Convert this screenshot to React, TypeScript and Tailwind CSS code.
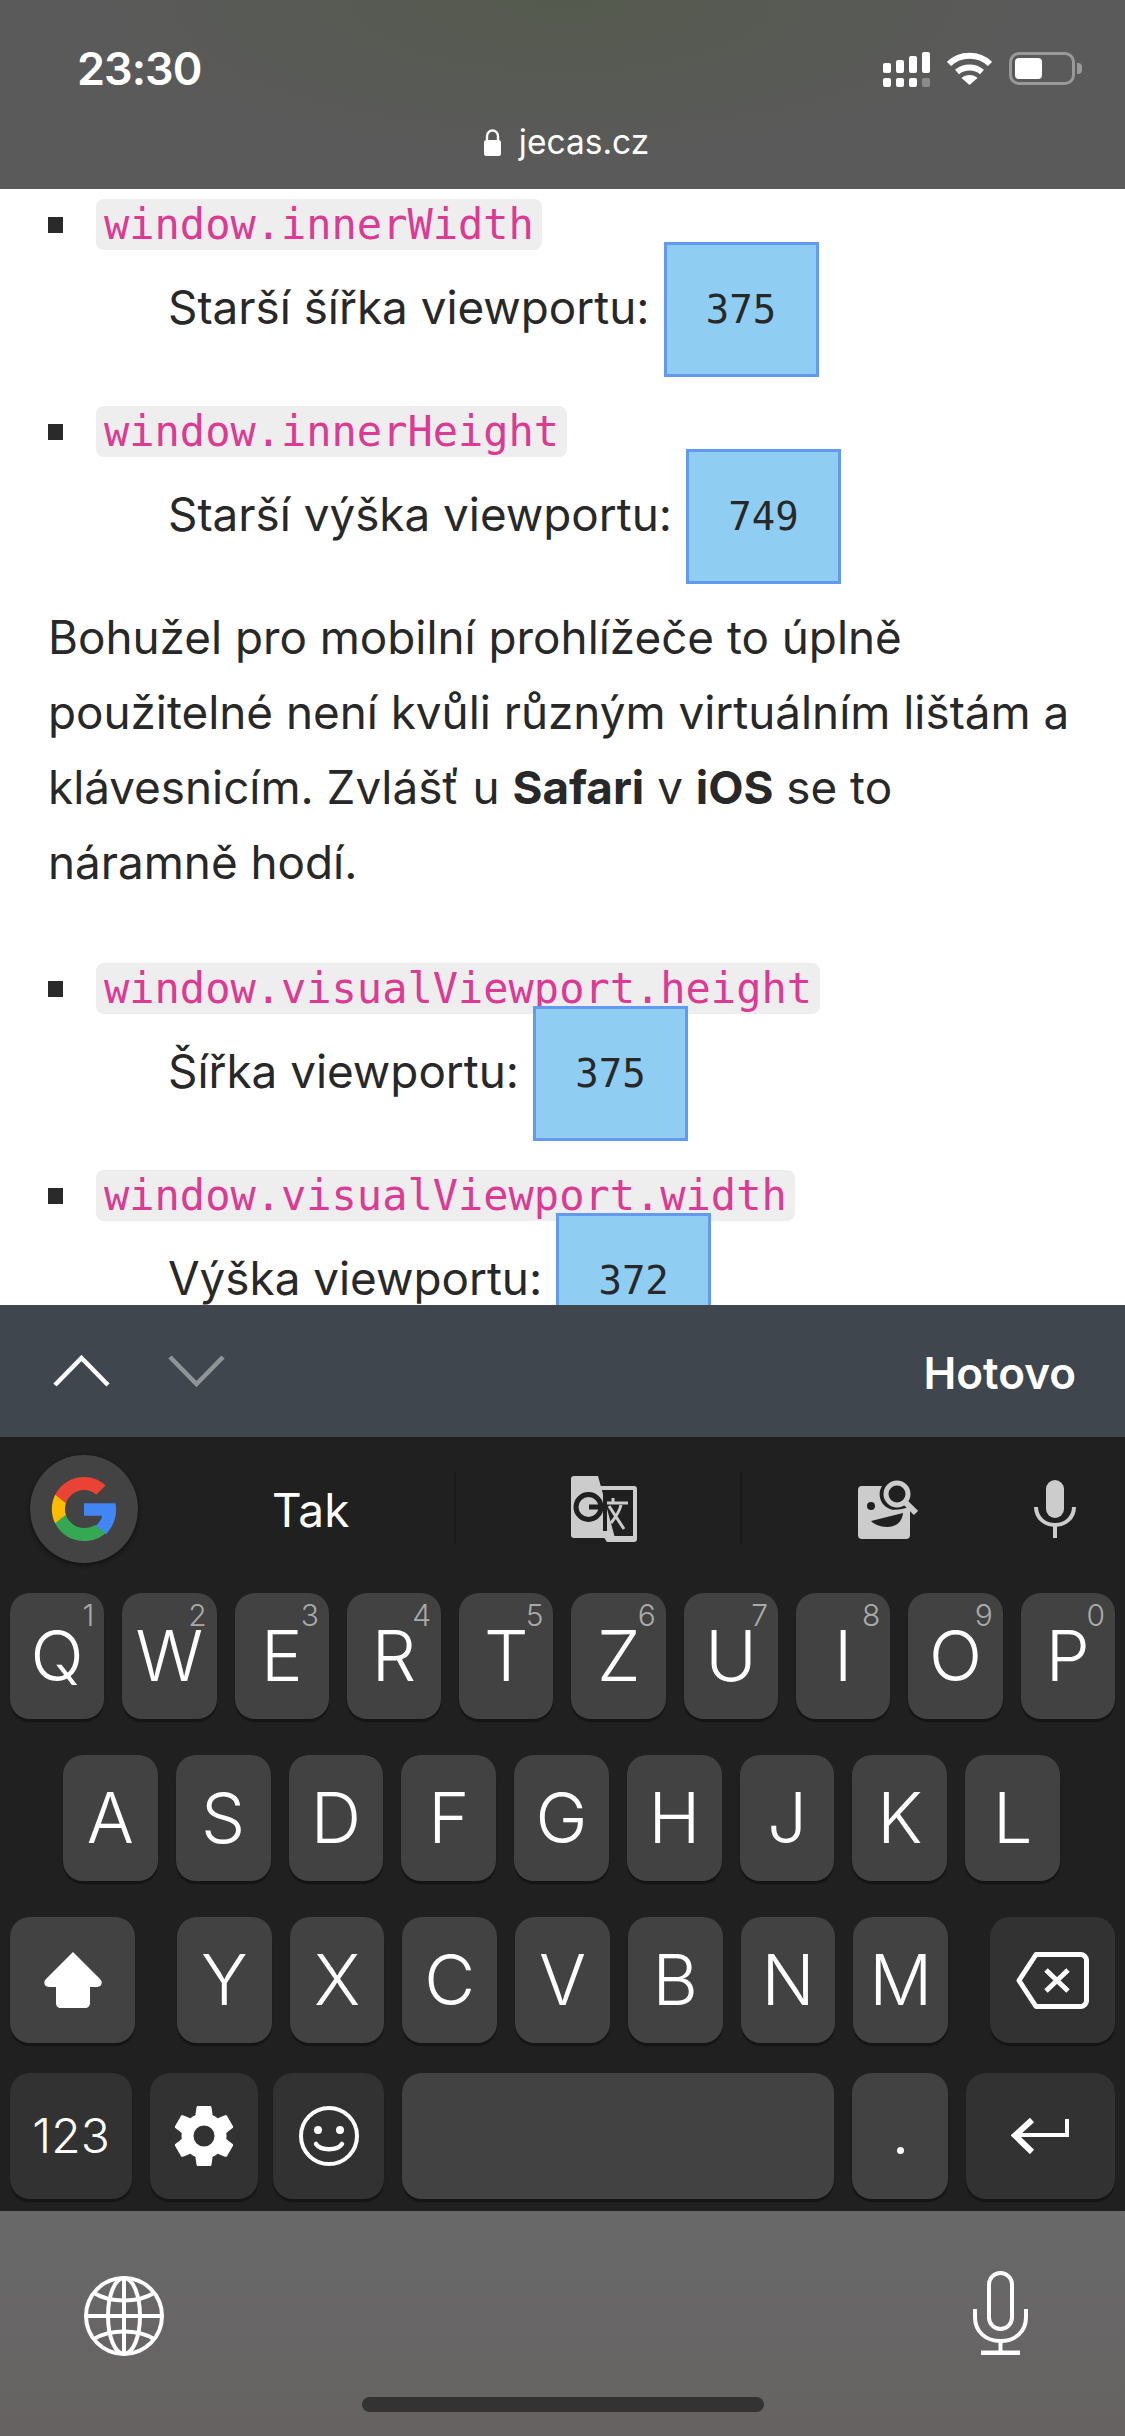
import type { ReactNode } from "react";

const Key = ({
  children,
  hint,
  dark,
  className = "",
}: {
  children?: ReactNode;
  hint?: string;
  dark?: boolean;
  className?: string;
}) => (
  <div
    className={`relative h-[126px] flex items-center justify-center rounded-[20px] shadow-[0_3px_1px_#151515] text-white ${dark ? "bg-[#323232]" : "bg-[#424242]"} ${className}`}
  >
    {hint && (
      <span className="absolute right-[10px] top-[4px] text-[30px] leading-[36px] font-light text-[#aaaaaa]">
        {hint}
      </span>
    )}
    {children}
  </div>
);

const Letter = ({ l, hint }: { l: string; hint?: string }) => (
  <Key hint={hint} className="flex-1">
    <span className="text-[70px] leading-none font-light">{l}</span>
  </Key>
);

const Entry = ({
  code,
  label,
  value,
  spaced,
}: {
  code: string;
  label: string;
  value: string;
  spaced?: boolean;
}) => (
  <li className={spaced ? "mt-[29px]" : ""}>
    <div className="flex items-center">
      <span className="w-[15px] h-[16px] ml-[48px] mr-[33px] bg-[#2a2a2a]" />
      <code className="h-[51px] px-[8px] flex items-center rounded-[8px] bg-[#efeeef] text-[#dc3a93] text-[42px] font-['DejaVu_Sans_Mono',monospace]">
        {code}
      </code>
    </div>
    <div className="relative flex items-center pl-[168px] -mt-[8px]">
      <span className="text-[45.8px] -mt-[2px]">{label}</span>
      <span className="ml-[14px] w-[155px] h-[135px] pt-[2px] flex items-center justify-center border-[3px] border-[#639af0] bg-[#8fcdf2] text-[39px] font-['DejaVu_Sans_Mono',monospace]">
        {value}
      </span>
    </div>
  </li>
);

const GoogleG = () => (
  <svg viewBox="0 0 48 48" className="w-[70px] h-[70px]">
    <path fill="#4285F4" d="M46 24.5c0-1.6-.1-3.1-.4-4.5H24v8.700h12.400c-.5 2.800-2.100 5.200-4.500 6.800v5.600h7.200C43.400 36.700 46 31.100 46 24.500z" />
    <path fill="#34A853" d="M24 46c6 0 11-2 14.700-5.400l-7.200-5.600c-2 1.300-4.500 2.100-7.500 2.100-5.800 0-10.700-3.900-12.400-9.100H4.200v5.800C7.900 41.100 15.400 46 24 46z" />
    <path fill="#FBBC05" d="M11.600 28c-.9-2.600-.9-5.400 0-8v-5.800H4.200c-3 6-3 13.600 0 19.600L11.600 28z" />
    <path fill="#EA4335" d="M24 10.900c3.200 0 6.100 1.100 8.400 3.300l6.400-6.400C34.900 4.200 29.900 2 24 2 15.400 2 7.900 6.900 4.200 14.200l7.400 5.800c1.700-5.200 6.600-9.100 12.400-9.100z" />
  </svg>
);

export default function App() {
  return (
    <div className="w-[1125px] h-[2436px] flex flex-col overflow-hidden bg-white text-[#282828] font-['Inter',sans-serif]">
      {/* status bar + address */}
      <header className="relative h-[189px] shrink-0 bg-[radial-gradient(ellipse_at_top,#555a4e,#5a5a5a_60%)] text-white">
        <div className="flex items-start justify-between pl-[77px] pr-[43px] pt-[42px]">
          <span className="text-[45px] leading-[54px] font-semibold tracking-[-1px]">23:30</span>
          <div className="flex items-start gap-[17px] pt-[10px]">
            <svg viewBox="0 0 47 35" className="w-[47px] h-[35px]" fill="#fff">
              <rect x="0" y="11" width="8" height="10" rx="2" />
              <rect x="13" y="8" width="8" height="13" rx="2" />
              <rect x="26" y="4" width="8" height="17" rx="2" />
              <rect x="39" y="0" width="8" height="21" rx="2" />
              <rect x="0" y="26" width="8" height="9" rx="2" />
              <rect x="13" y="26" width="8" height="9" rx="2" />
              <rect x="26" y="26" width="8" height="9" rx="2" />
              <rect x="39" y="26" width="8" height="9" rx="2" opacity="0.3" />
            </svg>
            <svg viewBox="0 0 45 33" className="w-[45px] h-[33px]" fill="none" stroke="#fff" strokeWidth="6">
              <path d="M2 12C13 1 32 1 43 12" />
              <path d="M10 20c7-6 18-6 25 0" />
              <path d="M22.500 33l-8-7c4-4 12-4 16 0z" fill="#fff" stroke="none" />
            </svg>
            <div className="flex items-center gap-[2px]">
              <div className="w-[66px] h-[33px] rounded-[10px] border-[3px] border-[#999999] p-[3px]">
                <div className="w-[27px] h-full rounded-[4px] bg-white" />
              </div>
              <div className="w-[5px] h-[11px] rounded-r-[4px] bg-[#999999]" />
            </div>
          </div>
        </div>
        <div className="flex items-center justify-center gap-[18px] absolute left-[8px] right-0 top-[120px]">
          <svg viewBox="0 0 17 27" className="w-[17px] h-[27px]" fill="#fff">
            <path d="M3 11V7a5.500 5.500 0 0 1 11 0v4" fill="none" stroke="#fff" strokeWidth="2.400" />
            <rect x="0" y="11" width="17" height="16" rx="2.500" />
          </svg>
          <span className="text-[33.5px] leading-[44px]">jecas.cz</span>
        </div>
      </header>

      {/* page content */}
      <main className="flex-1 min-h-0 overflow-hidden pt-[10px]">
        <ul>
          <Entry code="window.innerWidth" label="Starší šířka viewportu:" value="375" />
          <Entry code="window.innerHeight" label="Starší výška viewportu:" value="749" spaced />
        </ul>
        <p className="mt-[16px] mb-[63px] pl-[48px] pr-[40px] text-[45.8px] leading-[75px]">
          Bohužel pro mobilní prohlížeče to úplně použitelné není kvůli různým virtuálním lištám a klávesnicím. Zvlášť u <strong>Safari</strong> v <strong>iOS</strong> se to náramně hodí.
        </p>
        <ul>
          <Entry code="window.visualViewport.height" label="Šířka viewportu:" value="375" />
          <Entry code="window.visualViewport.width" label="Výška viewportu:" value="372" spaced />
        </ul>
      </main>

      {/* form accessory bar */}
      <div className="h-[132px] shrink-0 flex items-center justify-between bg-[#40464d] pl-[53px] pr-[49px] text-white">
        <div className="flex items-center gap-[58px]">
          <svg viewBox="0 0 57 32" className="w-[57px] h-[32px]" fill="none" stroke="#fff" strokeWidth="4.500">
            <path d="M2 30L28.500 3 55 30" />
          </svg>
          <svg viewBox="0 0 57 32" className="w-[57px] h-[32px]" fill="none" stroke="#8f9497" strokeWidth="4.500">
            <path d="M2 2l26.500 27L55 2" />
          </svg>
        </div>
        <span className="text-[44px] font-semibold mt-[4px]">Hotovo</span>
      </div>

      {/* keyboard */}
      <div className="h-[774px] shrink-0 bg-[#202020] pt-[18px]">
        <div className="flex items-center h-[108px] pl-[30px]">
          <div className="w-[108px] h-[108px] shrink-0 rounded-full bg-[#434343] flex items-center justify-center shadow-[0_2px_4px_#111]">
            <GoogleG />
          </div>
          <span className="ml-[134px] w-[75px] mt-[2px] text-[46px] text-white whitespace-nowrap">Tak</span>
          <div className="ml-[107px] w-[2px] h-[72px] bg-[#1a1a1a]" />
          <svg viewBox="0 0 66 66" className="ml-[115px] w-[66px] h-[66px]">
            <path fill="#cccccc" d="M3 0h24l17 62H3a3 3 0 0 1-3-3V3a3 3 0 0 1 3-3z" />
            <path fill="#cccccc" d="M26 10h37a3 3 0 0 1 3 3v50a3 3 0 0 1-3 3H36l-4-6h30V14H27z" />
            <circle cx="17.500" cy="31" r="12.500" fill="none" stroke="#202020" strokeWidth="5" />
            <path d="M18 31h12" stroke="#202020" strokeWidth="5" />
            <rect x="32" y="15" width="4" height="40" fill="#202020" />
            <path d="M36 27h21M42 22v5M38 30l15 23M50 29c-2 8-6 13-10 18" stroke="#cccccc" fill="none" strokeWidth="3" />
          </svg>
          <div className="ml-[103px] w-[2px] h-[72px] bg-[#1a1a1a]" />
          <svg viewBox="0 0 60 60" className="ml-[116px] w-[60px] h-[60px]">
            <path fill="#cccccc" d="M4 7h20c-5 8-2 19 8 23 5 2 12 0 20-2v28a4 4 0 0 1-4 4H4a4 4 0 0 1-4-4V11a4 4 0 0 1 4-4z" />
            <circle cx="39" cy="15" r="11" fill="none" stroke="#cccccc" strokeWidth="5" />
            <path d="M47 23l11 11" stroke="#cccccc" strokeWidth="6" />
            <circle cx="13" cy="27" r="4" fill="#202020" />
            <path d="M13 42l32-8c-1 10-8 14-16 14-6 0-12-2-16-6z" fill="#202020" />
          </svg>
          <svg viewBox="0 0 42 58" className="ml-[116px] w-[42px] h-[58px]">
            <rect x="12" y="0" width="18" height="38" rx="9" fill="#cccccc" />
            <path d="M2 27c0 11 9 18 19 18s19-7 19-18" fill="none" stroke="#cccccc" strokeWidth="4" />
            <path d="M21 44v14" stroke="#cccccc" strokeWidth="4" />
          </svg>
        </div>

        <div className="mt-[30px] flex gap-[18px] px-[10px]">
          <Letter l="Q" hint="1" />
          <Letter l="W" hint="2" />
          <Letter l="E" hint="3" />
          <Letter l="R" hint="4" />
          <Letter l="T" hint="5" />
          <Letter l="Z" hint="6" />
          <Letter l="U" hint="7" />
          <Letter l="I" hint="8" />
          <Letter l="O" hint="9" />
          <Letter l="P" hint="0" />
        </div>

        <div className="mt-[36px] flex gap-[18px] pl-[63px] pr-[65px]">
          {["A", "S", "D", "F", "G", "H", "J", "K", "L"].map((l) => (
            <Letter key={l} l={l} />
          ))}
        </div>

        <div className="mt-[36px] flex gap-[18px] px-[10px]">
          <Key className="w-[125px] mr-[24px]">
            <svg viewBox="0 0 58 56" className="w-[58px] h-[56px]" fill="#fff">
              <path d="M29 0L56 27c3 3 2 8-3 8h-7v16c0 3-2 5-5 5H17c-3 0-5-2-5-5V35H5c-5 0-6-5-3-8z" />
            </svg>
          </Key>
          {["Y", "X", "C", "V", "B", "N", "M"].map((l) => (
            <Letter key={l} l={l} />
          ))}
          <Key dark className="w-[125px] ml-[24px]">
            <svg viewBox="0 0 73 57" className="w-[73px] h-[57px]" fill="none" stroke="#fff" strokeWidth="5">
              <path d="M20 2.500h44a6 6 0 0 1 6.500 6.500v39a6 6 0 0 1-6.500 6.500H20L3 28.500z" strokeLinejoin="round" />
              <path d="M30 18l22 21M52 18L30 39" />
            </svg>
          </Key>
        </div>

        <div className="mt-[30px] flex gap-[18px] px-[10px]">
          <Key dark className="w-[122px]">
            <span className="text-[48px] font-[350]">123</span>
          </Key>
          <Key dark className="w-[108px]">
            <svg viewBox="0 0 24 24" className="w-[72px] h-[72px]" fill="#fff">
              <path d="M19.430 12.980c.04-.32.070-.64.070-.98s-.03-.660-.070-.98l2.110-1.650c.19-.15.240-.42.120-.64l-2-3.460c-.12-.22-.39-.3-.610-.22l-2.490 1c-.52-.4-1.080-.73-1.690-.98l-.38-2.650A.488.488 0 0 0 14 2h-4c-.25 0-.46.18-.49.42l-.38 2.650c-.61.25-1.170.59-1.690.98l-2.490-1c-.23-.09-.49 0-.61.22l-2 3.460c-.13.22-.07.490.12.640l2.110 1.650c-.04.32-.07.650-.07.980s.03.660.07.980l-2.110 1.650c-.19.15-.24.42-.12.640l2 3.460c.12.22.39.3.610.22l2.490-1c.52.4 1.080.73 1.690.98l.38 2.650c.03.24.24.42.49.42h4c.25 0 .46-.18.49-.42l.38-2.650c.61-.25 1.170-.59 1.690-.98l2.490 1c.23.09.49 0 .61-.22l2-3.460c.12-.22.07-.49-.12-.64l-2.110-1.650zM12 15.500a3.500 3.500 0 1 1 0-7 3.500 3.500 0 0 1 0 7z" />
            </svg>
          </Key>
          <Key dark className="w-[111px] -ml-[3px]">
            <svg viewBox="0 0 60 60" className="w-[60px] h-[60px]" fill="none" stroke="#fff" strokeWidth="4">
              <circle cx="30" cy="30" r="28" />
              <circle cx="19" cy="24" r="4" fill="#fff" stroke="none" />
              <circle cx="41" cy="24" r="4" fill="#fff" stroke="none" />
              <path d="M17 38c5 7 21 7 26 0" strokeLinecap="round" strokeWidth="4.500" />
            </svg>
          </Key>
          <Key className="flex-1" />
          <Key className="w-[96px]">
            <span className="w-[7px] h-[7px] mt-[28px] rounded-full bg-white" />
          </Key>
          <Key dark className="w-[149px]">
            <svg viewBox="0 0 59 36" className="w-[59px] h-[36px]" fill="none" stroke="#fff">
              <path d="M56 1v16H6" strokeWidth="4" />
              <path d="M21 2L4 17.500 21 34" strokeWidth="6" />
            </svg>
          </Key>
        </div>
      </div>

      {/* safari bottom area */}
      <div className="relative h-[225px] shrink-0 bg-gradient-to-b from-[#696969] to-[#666262]">
        <div className="flex items-start justify-between pl-[84px] pr-[97px] pt-[60px]">
          <svg viewBox="0 0 80 80" className="w-[80px] h-[80px] mt-[5px]" fill="none" stroke="#fff" strokeWidth="4">
            <circle cx="40" cy="40" r="38" />
            <ellipse cx="40" cy="40" rx="16" ry="38" />
            <path d="M40 2v76M2 40h76" />
            <path d="M10 17c16 10 44 10 60 0M10 63c16-10 44-10 60 0" />
          </svg>
          <svg viewBox="0 0 55 84" className="w-[55px] h-[84px]" fill="none" stroke="#fff" strokeWidth="4">
            <rect x="16" y="2" width="23" height="56" rx="11.500" />
            <path d="M2 38v8c0 15 11 24 25.500 24S53 61 53 46v-8" />
            <path d="M27.500 70v12" />
            <path d="M8 82h39" strokeWidth="5" />
          </svg>
        </div>
        <div className="absolute left-[362px] top-[186px] w-[402px] h-[15px] rounded-full bg-[#333333]" />
      </div>
    </div>
  );
}
